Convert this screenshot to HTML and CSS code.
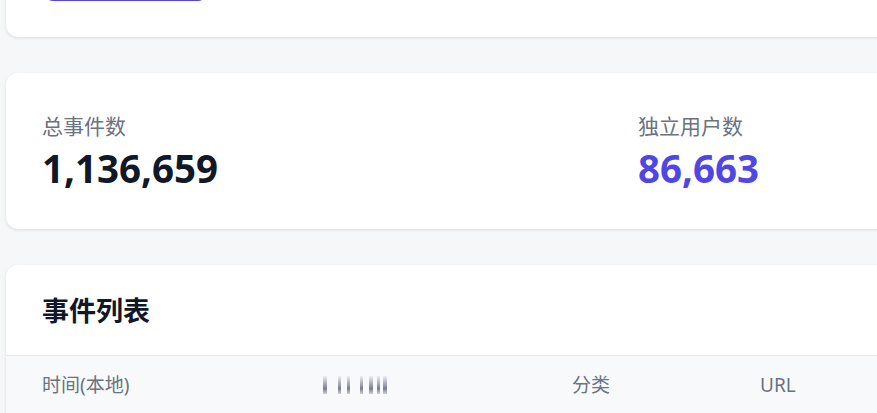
FILE: index.html
```html
<!DOCTYPE html>
<html lang="zh-CN">
<head>
    <meta charset="UTF-8">
    <title>事件统计</title>
    <link rel="stylesheet" href="styles.css">
</head>
<body>
    <div class="page">
        <div class="card filter-card">
            <button class="btn-primary" aria-label="查询"></button>
        </div>

        <div class="card stats-card">
            <div class="stat">
                <div class="stat-label">总事件数</div>
                <div class="stat-value">1,136,659</div>
            </div>
            <div class="stat">
                <div class="stat-label">独立用户数</div>
                <div class="stat-value accent">86,663</div>
            </div>
        </div>

        <div class="card list-card">
            <h2 class="list-title">事件列表</h2>
            <div class="table-head">
                <div class="th">时间(本地)</div>
                <div class="th">
                    <span class="bars">
                        <i class="b"></i><i class="b"></i><i class="b"></i><i class="b"></i><i class="b"></i><i class="b"></i><i class="b"></i>
                    </span>
                </div>
                <div class="th">分类</div>
                <div class="th">URL</div>
            </div>
        </div>
    </div>
</body>
</html>
```

FILE: styles.css
```css
html, body {
    margin: 0;
    padding: 0;
    overflow: hidden;
}
body {
    font-family: "Noto Sans", "Noto Sans CJK SC", sans-serif;
    background: #f6f7f9;
    color: #111827;
}
.page {
    margin-top: -41px;
    padding-left: 6px;
    width: 1400px;
    display: flex;
    flex-direction: column;
    gap: 36px;
}
.card {
    background: #fff;
    border-radius: 12px;
    box-shadow: 0 1px 3px rgba(15, 23, 42, 0.12);
}
.filter-card {
    padding: 0 36px 36px;
}
.btn-primary {
    display: block;
    margin-left: 3px;
    width: 161px;
    height: 42px;
    border: none;
    border-radius: 8px;
    background: #4f46e5;
}
.stats-card {
    padding: 39px 36px 38px;
    display: grid;
    grid-template-columns: 596px 596px;
}
.stat-label {
    font-size: 21px;
    line-height: 28px;
    color: #6b7280;
}
.stat-value {
    margin-top: 5px;
    font-size: 38.5px;
    line-height: 46px;
    font-weight: 700;
    color: #111827;
}
.stat-value.accent {
    color: #4f46e5;
}
.list-title {
    margin: 0;
    padding: 31px 36px 29px;
    font-size: 27px;
    line-height: 30px;
    font-weight: 700;
    border-bottom: 1px solid #e5e7eb;
}
.table-head {
    background: #f8f9fb;
    padding: 0 36px;
    display: grid;
    grid-template-columns: 280px 250px 188px 1fr;
    height: 70px;
}
.th {
    padding-top: 17px;
    font-size: 19px;
    line-height: 24px;
    color: #6b7280;
}
.bars {
    display: inline-flex;
    align-items: flex-end;
    height: 18px;
    margin-top: 3px;
}
.b {
    display: block;
    width: 3px;
    height: 18px;
    background: linear-gradient(to bottom, rgba(140, 144, 155, 0.1), #7a7f8c 70%, rgba(140, 144, 155, 0.4));
}
.b:nth-child(1) { width: 4px; margin-left: 1px; }
.b:nth-child(2) { margin-left: 11px; }
.b:nth-child(3) { margin-left: 6px; }
.b:nth-child(4) { margin-left: 10px; }
.b:nth-child(5) { margin-left: 6px; width: 4px; }
.b:nth-child(6) { margin-left: 4px; }
.b:nth-child(7) { margin-left: 3px; width: 4px; }
```
